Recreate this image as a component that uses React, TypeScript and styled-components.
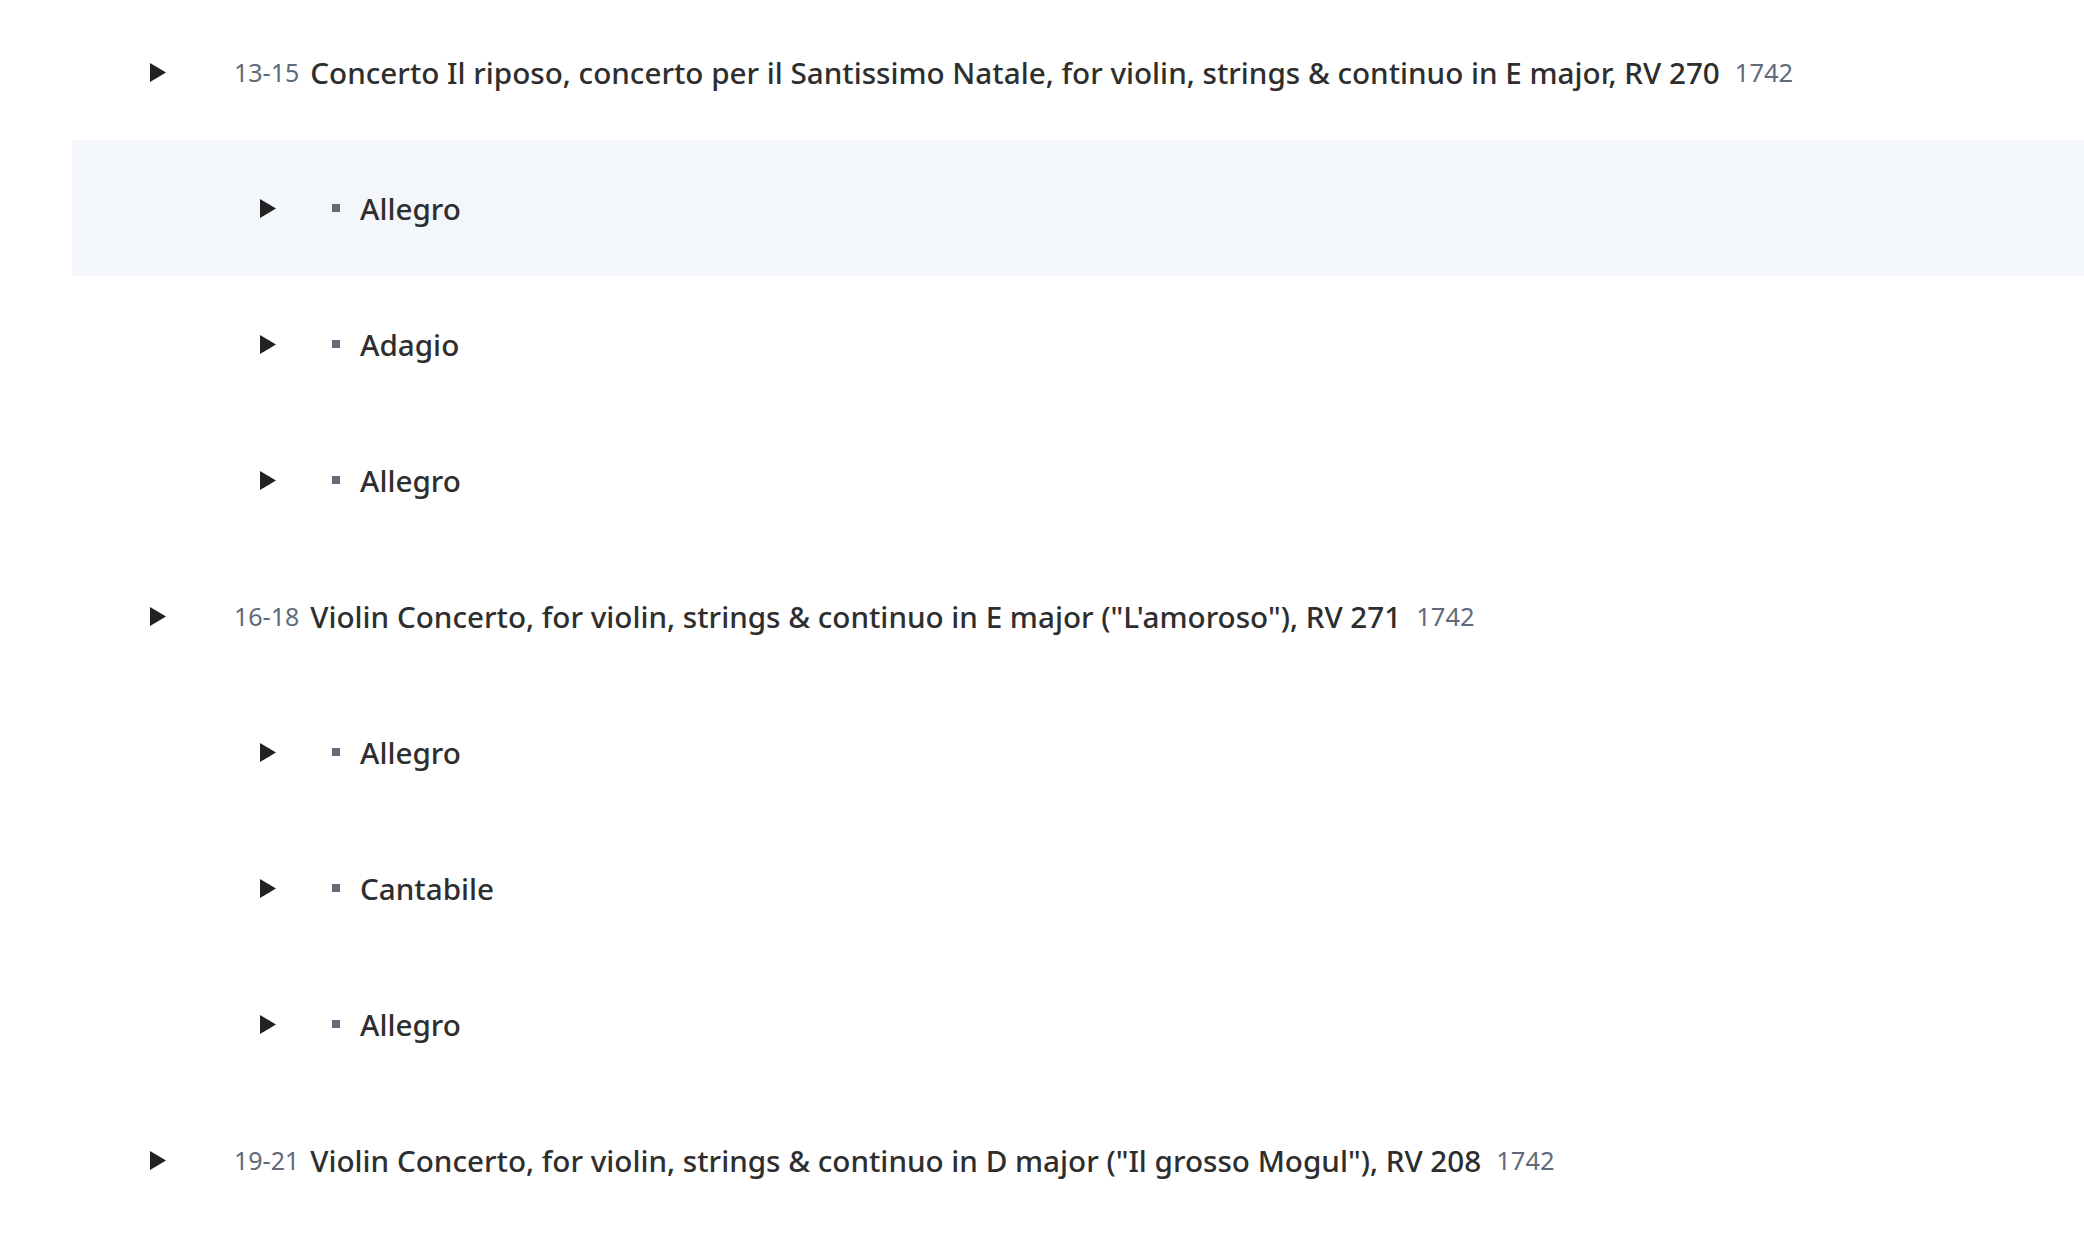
import React from "react";
import styled, { createGlobalStyle } from "styled-components";

const Global = createGlobalStyle`
  html, body { margin: 0; padding: 0; background: #ffffff; }
  body { font-family: "Noto Sans", "Open Sans", sans-serif; color: #2e2e2e; }
`;

const List = styled.div`
  display: flex;
  flex-direction: column;
  padding: 4px 0 0 72px;
`;

const Row = styled.div<{ $active?: boolean; $level: number }>`
  display: flex;
  align-items: center;
  height: 136px;
  padding-left: ${(p) => (p.$level === 0 ? 78 : 188)}px;
  background: ${(p) => (p.$active ? "#f3f6fa" : "transparent")};
`;

const Toggle = styled.span`
  display: inline-flex;
  width: 16px;
  height: 19px;
  flex-shrink: 0;
`;

const Num = styled.span`
  margin-left: 68px;
  font-size: 25px;
  color: #5f6b7a;
  margin-right: 11px;
`;

const Title = styled.span`
  font-size: 29.65px;
  font-weight: 500;
  color: #2e2e2e;
`;

const Year = styled.span`
  margin-left: 15px;
  font-size: 25.5px;
  color: #5f6b7a;
`;

const Bullet = styled.span`
  width: 8px;
  height: 8px;
  background: #5f6b7a;
  margin-left: 56px;
  margin-right: 20px;
  flex-shrink: 0;
`;

const Triangle = () => (
  <Toggle>
    <svg width="16" height="19" viewBox="0 0 16 19">
      <polygon points="0,0 16,9.5 0,19" fill="#222" />
    </svg>
  </Toggle>
);

type Item = { num?: string; title: string; year?: string; level: number };

const items: Item[] = [
  { num: "13-15", title: "Concerto Il riposo, concerto per il Santissimo Natale, for violin, strings & continuo in E major, RV 270", year: "1742", level: 0 },
  { title: "Allegro", level: 1 },
  { title: "Adagio", level: 1 },
  { title: "Allegro", level: 1 },
  { num: "16-18", title: "Violin Concerto, for violin, strings & continuo in E major (\"L'amoroso\"), RV 271", year: "1742", level: 0 },
  { title: "Allegro", level: 1 },
  { title: "Cantabile", level: 1 },
  { title: "Allegro", level: 1 },
  { num: "19-21", title: "Violin Concerto, for violin, strings & continuo in D major (\"Il grosso Mogul\"), RV 208", year: "1742", level: 0 },
];

export default function App() {
  return (
    <>
      <Global />
      <List>
        {items.map((it, i) => (
          <Row key={i} $level={it.level} $active={i === 1}>
            <Triangle />
            {it.level === 0 ? (
              <>
                <Num>{it.num}</Num>
                <Title>{it.title}</Title>
                <Year>{it.year}</Year>
              </>
            ) : (
              <>
                <Bullet />
                <Title>{it.title}</Title>
              </>
            )}
          </Row>
        ))}
      </List>
    </>
  );
}
